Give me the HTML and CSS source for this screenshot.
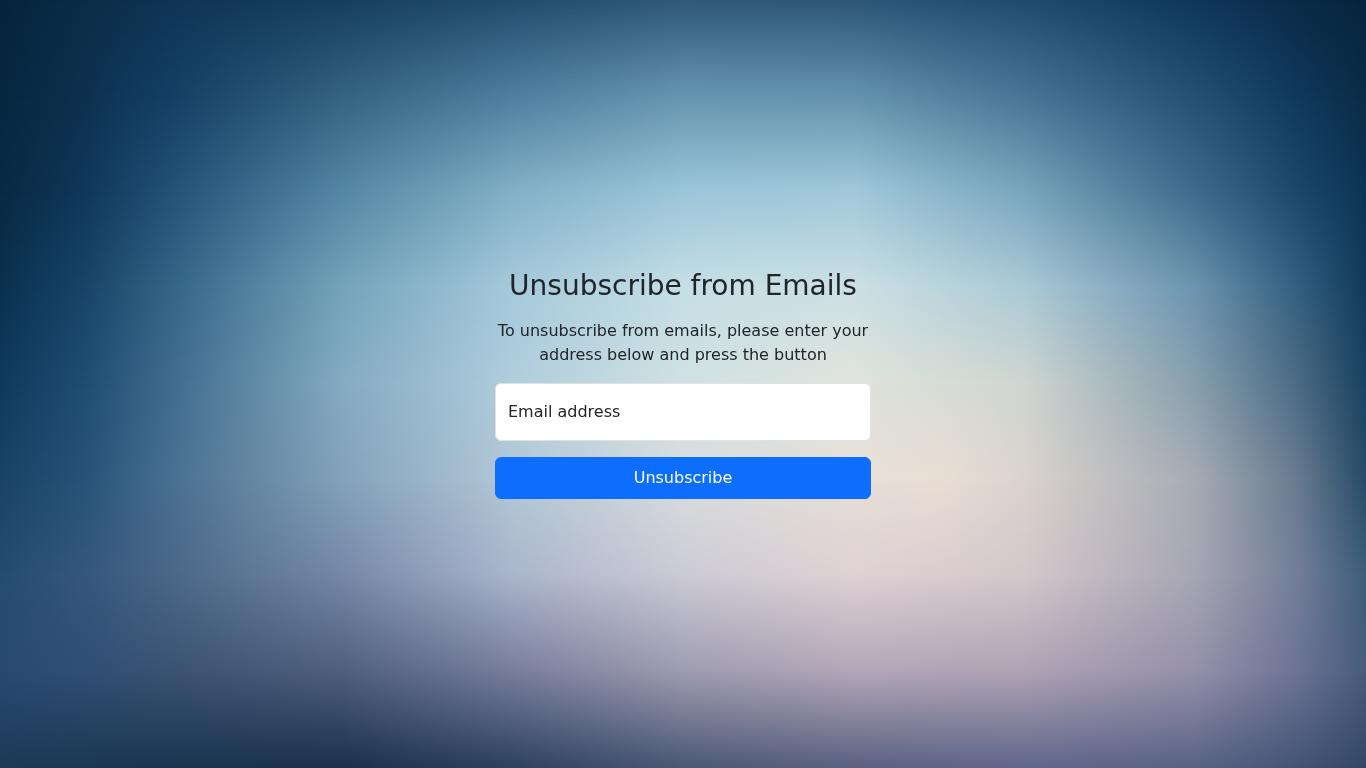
FILE: index.html
```html
<!DOCTYPE html>
<html lang="en">
<head>
<meta charset="utf-8">
<meta name="viewport" content="width=device-width, initial-scale=1">
<title>Unsubscribe from Emails</title>
<link rel="stylesheet" href="styles.css">
</head>
<body>
<div class="backdrop" aria-hidden="true">
  <div class="band band-1"></div>
  <div class="band band-2"></div>
  <div class="band band-3"></div>
  <div class="band band-4"></div>
  <div class="band band-5"></div>
  <div class="band band-6"></div>
  <div class="band band-7"></div>
  <div class="band band-8"></div>
  <div class="band band-9"></div>
</div>
<main class="page">
  <form class="unsubscribe">
    <h1 class="title">Unsubscribe from Emails</h1>
    <p class="lead">To unsubscribe from emails, please enter your address below and press the button</p>
    <div class="field">
      <input class="field-input" type="email" id="email" name="email" placeholder=" ">
      <label class="field-label" for="email">Email address</label>
    </div>
    <button class="submit" type="submit">Unsubscribe</button>
  </form>
</main>
</body>
</html>
```
FILE: styles.css
```css
* {
  box-sizing: border-box;
}

body {
  margin: 0;
  background: #16395a;
  color: #212529;
  font-family: "DejaVu Sans", sans-serif;
  font-size: 16px;
  line-height: 24px;
}

/* Backdrop: horizontal colour bands, each faded into the one above it */
.backdrop {
  position: fixed;
  inset: 0;
  z-index: -1;
}

.band {
  position: absolute;
  inset: 0;
  mask-image: linear-gradient(to bottom, transparent var(--from), #000 var(--to));
}

.band-1 {
  mask-image: none;
  background: linear-gradient(to right, #05243b, #0a2d49 6.25%, #0f3454 12.5%, #173e5d 25%, #234c6c 37.5%, #305878 50%, #2e5676 62.5%, #1f4b6e 75%, #0f365b 87.5%, #0a2b48 95%, #06243c);
}

.band-2 {
  --from: 0%;
  --to: 12.5%;
  background: linear-gradient(to right, #06273f, #0d3150 6.25%, #143f64 12.5%, #34637f 25%, #4e7f9e 37.5%, #6695b1 50%, #6493af 62.5%, #487594 75%, #235073 87.5%, #10385b 95%, #092c48);
}

.band-3 {
  --from: 12.5%;
  --to: 25%;
  background: linear-gradient(to right, #072a45, #103759 6.25%, #235178 12.5%, #5487a4 25%, #83b0c8 37.5%, #9cc6d9 50%, #a1c9da 62.5%, #79a5be 75%, #3f6b8b 87.5%, #1b476b 95%, #0d3353);
}

.band-4 {
  --from: 25%;
  --to: 37.5%;
  background: linear-gradient(to right, #0a304e, #184468 6.25%, #336586 12.5%, #74a3bb 25%, #a6cadb 37.5%, #c5dfe6 50%, #cce0e4 62.5%, #abcad5 75%, #6c94b0 87.5%, #345f7f 95%, #123959);
}

.band-5 {
  --from: 37.5%;
  --to: 50%;
  background: linear-gradient(to right, #10395c, #1f4d74 6.25%, #416b8d 12.5%, #84abc2 25%, #b0cddc 37.5%, #d0e1e2 50%, #e0e4dc 62.5%, #cfd5d0 75%, #879fad 87.5%, #4b6b85 95%, #194261);
}

.band-6 {
  --from: 50%;
  --to: 62.5%;
  background: linear-gradient(to right, #1a4266, #285378 6.25%, #486f90 12.5%, #83a2ba 25%, #b3c7d6 37.5%, #d9dddf 50%, #e7dfd7 62.5%, #eaded4 68.75%, #dad3cd 75%, #a6abb4 87.5%, #677b8f 95%, #274b69);
}

.band-7 {
  --from: 62.5%;
  --to: 75%;
  background: linear-gradient(to right, #254c6f, #34587b 6.25%, #4a6788 12.5%, #7587a7 25%, #aab5cb 37.5%, #cbcad5 50%, #dfd1d3 62.5%, #d4c7cb 75%, #a6a6b3 87.5%, #727e98 95%, #3d5d7a);
}

.band-8 {
  --from: 75%;
  --to: 87.5%;
  background: linear-gradient(to right, #284a70, #304f74 6.25%, #3b5273 12.5%, #4e5f7c 25%, #777d9b 37.5%, #9d9bb0 50%, #b2a6b7 62.5%, #afa2b4 75%, #9490a9 87.5%, #6c7394 95%, #475b7d);
}

.band-9 {
  --from: 87.5%;
  --to: 100%;
  background: linear-gradient(to right, #1c3a58, #1b3754 6.25%, #1a3450 12.5%, #1a304b 25%, #2c415f 37.5%, #4a5773 50%, #5a6080 62.5%, #60668a 75%, #586284 87.5%, #445375 95%, #334669);
}

.page {
  display: grid;
  place-items: center;
  min-height: 100vh;
  padding: 16px;
}

.unsubscribe {
  display: flex;
  flex-direction: column;
  gap: 16px;
  width: 100%;
  max-width: 376px;
  text-align: center;
}

.title {
  margin: 0;
  font-size: 28px;
  font-weight: 400;
  line-height: 34px;
}

.lead {
  margin: 0;
}

.field {
  position: relative;
}

.field-input {
  display: block;
  width: 100%;
  height: 58px;
  padding: 24px 12px 8px;
  border: 1px solid #dee2e6;
  border-radius: 6px;
  background: #fff;
  color: inherit;
  font: inherit;
}

.field-label {
  position: absolute;
  top: 0;
  left: 0;
  padding: 17px 13px;
  pointer-events: none;
}

.field-input:focus {
  border-color: #86b7fe;
  outline: 4px solid #0d6efd40;
}

.field-input:focus + .field-label,
.field-input:not(:placeholder-shown) + .field-label {
  padding-top: 4px;
  font-size: 13px;
}

.submit {
  padding: 8px 12px;
  border: 1px solid #0d6efd;
  border-radius: 6px;
  background: #0d6efd;
  color: #fff;
  font: inherit;
  cursor: pointer;
}

.submit:hover {
  background: #0b5ed7;
}
```
